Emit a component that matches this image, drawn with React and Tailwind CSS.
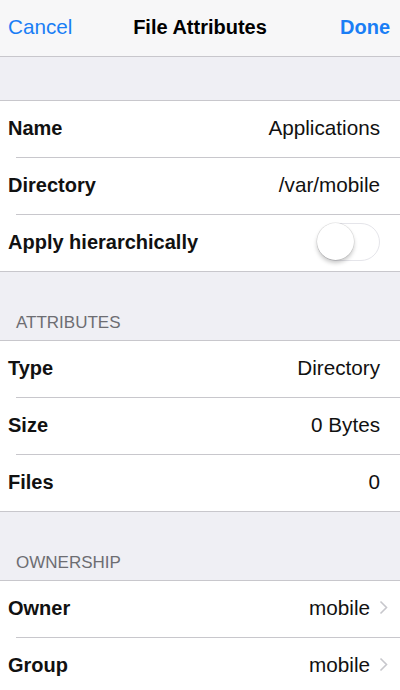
import React, { useState } from 'react';

function Chevron() {
  return (
    <svg width="9" height="15" viewBox="0 0 9 15" className="ml-[9px] shrink-0">
      <path d="M1.5 1.5 L7.5 7.5 L1.5 13.5" fill="none" stroke="#c7c7cc" strokeWidth="1.6" />
    </svg>
  );
}

function Toggle({ on, onChange }) {
  return (
    <button
      onClick={() => onChange(!on)}
      className={`relative w-[63px] h-[38px] rounded-full border-[1.5px] ${on ? 'bg-[#4cd964] border-[#4cd964]' : 'bg-white border-[#e5e5ea]'}`}
    >
      <span
        className={`absolute top-[-1px] ${on ? 'left-[24px]' : 'left-[-1px]'} w-[37px] h-[37px] rounded-full bg-white shadow-[0_3px_4px_rgba(0,0,0,0.22),0_0_0_0.5px_rgba(0,0,0,0.12)]`}
      />
    </button>
  );
}

function Row({ label, value, chevron, children }) {
  return (
    <div className={`h-[56px] flex items-center justify-between pl-2 pb-[3px] bg-white ${chevron ? 'pr-3' : 'pr-5'}`}>
      <span className="font-bold text-[#111]">{label}</span>
      {children ? (
        children
      ) : (
        <div className="flex items-center">
          <span className="text-[20.7px] text-[#111]">{value}</span>
          {chevron && <Chevron />}
        </div>
      )}
    </div>
  );
}

function Group({ rows }) {
  return (
    <div className="bg-white border-y border-[#c8c7cc]">
      {rows.map((r, i) => (
        <div key={r.label}>
          {i > 0 && <div className="h-px ml-4 bg-[#c8c7cc]" />}
          <Row {...r} />
        </div>
      ))}
    </div>
  );
}

function SectionHeader({ title }) {
  return (
    <div className="h-[68px] flex items-end px-4 pb-[7px]">
      <span className="text-[17px] leading-[20px] text-[#6d6d72]">{title}</span>
    </div>
  );
}

export default function App() {
  const [applyAll, setApplyAll] = useState(false);

  return (
    <div className="w-[400px] h-[690px] overflow-hidden bg-[#efeff4] text-[20px] font-['Liberation_Sans',Arial,sans-serif]">
      {/* Nav bar */}
      <div className="h-[57px] bg-[#f7f7f8] border-b border-[#c8c7cc] grid grid-cols-[1fr_auto_1fr] items-center px-2 pb-[2px]">
        <button className="justify-self-start text-[#1a7ef5] text-[20.7px]">Cancel</button>
        <span className="font-bold text-black">File Attributes</span>
        <button className="justify-self-end text-[#1a7ef5] font-bold mr-[2px]">Done</button>
      </div>

      <div className="h-[43px]" />

      <div className="bg-white border-y border-[#c8c7cc]">
        <Row label="Name" value="Applications" />
        <div className="h-px ml-4 bg-[#c8c7cc]" />
        <Row label="Directory" value="/var/mobile" />
        <div className="h-px ml-4 bg-[#c8c7cc]" />
        <Row label="Apply hierarchically">
          <Toggle on={applyAll} onChange={setApplyAll} />
        </Row>
      </div>

      <SectionHeader title="ATTRIBUTES" />
      <Group
        rows={[
          { label: 'Type', value: 'Directory' },
          { label: 'Size', value: '0 Bytes' },
          { label: 'Files', value: '0' },
        ]}
      />

      <SectionHeader title="OWNERSHIP" />
      <Group
        rows={[
          { label: 'Owner', value: 'mobile', chevron: true },
          { label: 'Group', value: 'mobile', chevron: true },
        ]}
      />
    </div>
  );
}
